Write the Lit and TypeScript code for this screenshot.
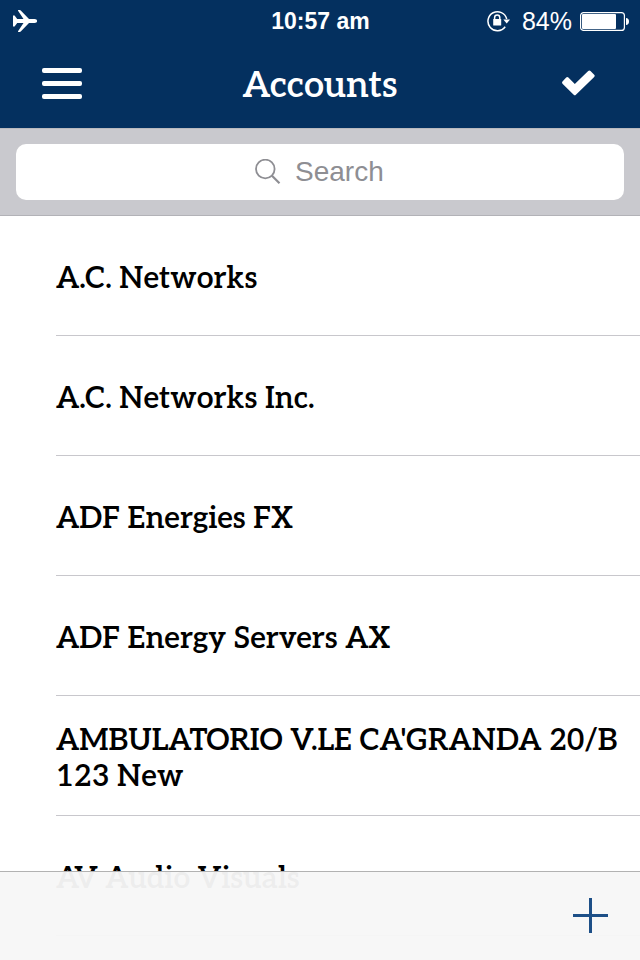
import { LitElement, html, css } from "lit";
import { customElement, property, state } from "lit/decorators.js";

@customElement("status-bar")
class StatusBar extends LitElement {
  @property() time = "";
  @property({ type: Number }) battery = 0;

  static styles = css`
    :host {
      display: grid;
      grid-template-columns: 1fr auto 1fr;
      align-items: center;
      height: 40px;
      padding: 0 11px 0 12px;
      color: #fff;
      font-family: "Liberation Sans", Helvetica, Arial, sans-serif;
    }
    svg {
      display: block;
    }
    .time {
      font-size: 23px;
      font-weight: 700;
      line-height: 42px;
    }
    .right {
      display: flex;
      align-items: center;
      justify-content: flex-end;
    }
    .percent {
      margin: 0 8px 0 12px;
      font-size: 25px;
      line-height: 42px;
    }
  `;

  render() {
    return html`
      <svg width="26" height="24" viewBox="0 0 26 24" fill="#fff" aria-label="Airplane mode">
        <path d="M1 6.500h1.600l2.600 3.500h6.300L6.200 2C5.800 1.200 6 1 6.500 1h1.300c.5 0 .8.200 1.200.7l8 8.300h5.500c1.700 0 2.600.9 2.600 2s-.9 2-2.600 2H17L9 22.300c-.4.5-.7.700-1.200.7H6.500c-.5 0-.7-.2-.3-1l5.300-8H5.200l-2.600 3.500H1z" />
      </svg>
      <span class="time">${this.time}</span>
      <div class="right">
        <svg width="23" height="22" viewBox="0 0 23 22" fill="none" stroke="#fff" stroke-width="1.500" aria-label="Rotation lock">
          <path d="M18.200 16.700A9.500 9.500 0 1 1 19.700 9" />
          <path d="M16.300 9.500h6.700l-3.300 4z" fill="#fff" stroke="none" />
          <path d="M7.600 9.500V7.700a2.600 2.600 0 0 1 5.200 0V9.500" />
          <rect x="6.200" y="9" width="8" height="6.500" rx="0.500" fill="#fff" stroke="none" />
        </svg>
        <span class="percent">${this.battery}%</span>
        <svg width="49" height="19" viewBox="0 0 49 19" fill="#fff" aria-label="Battery">
          <rect x="0.600" y="0.600" width="43.800" height="17.800" rx="3" fill="none" stroke="#fff" stroke-width="1.200" />
          <rect x="2" y="2" width=${Math.round(this.battery * 0.41)} height="15" rx="1" />
          <path d="M46 6c1.800 0 3 1.500 3 3.500S47.800 13 46 13z" />
        </svg>
      </div>
    `;
  }
}

@customElement("app-root")
class AppRoot extends LitElement {
  @state() private accounts = [
    "A.C. Networks",
    "A.C. Networks Inc.",
    "ADF Energies FX",
    "ADF Energy Servers AX",
    "AMBULATORIO V.LE CA'GRANDA 20/B 123 New",
    "AV Audio Visuals",
  ];

  static styles = css`
    :host {
      display: block;
      min-height: 100vh;
      background: #fff;
      color: #000;
      font-family: Aleo, "Liberation Serif", serif;
    }
    svg {
      display: block;
    }
    button {
      display: flex;
      align-items: center;
      justify-content: center;
      padding: 0;
      border: 0;
      background: none;
      cursor: pointer;
    }
    .top {
      background: #04305f;
    }
    .nav {
      display: grid;
      grid-template-columns: 1fr auto 1fr;
      align-items: center;
      height: 88px;
      padding: 0 32px;
    }
    .icon-button {
      width: 60px;
      height: 60px;
    }
    .done {
      justify-self: end;
    }
    h1 {
      margin: 0;
      padding-top: 4px;
      color: #fff;
      font-size: 36px;
      line-height: 44px;
      font-weight: 600;
    }
    .search {
      padding: 15px 16px;
      border-top: 1px solid #b9b9be;
      border-bottom: 1px solid #b2b2b7;
      background: #c9c9ce;
    }
    .field {
      display: flex;
      align-items: center;
      justify-content: center;
      gap: 14px;
      height: 56px;
      border-radius: 10px;
      background: #fff;
    }
    .field input {
      field-sizing: content;
      min-width: 90px;
      max-width: 80%;
      padding: 0;
      border: 0;
      outline: 0;
      background: none;
      color: #000;
      font-family: "Liberation Sans", Helvetica, Arial, sans-serif;
      font-size: 28px;
      line-height: 36px;
    }
    .field input::placeholder {
      color: #8e8e93;
      opacity: 1;
    }
    .list {
      margin: 0;
      padding: 0 0 0 56px;
      list-style: none;
    }
    .row {
      display: flex;
      align-items: center;
      box-sizing: border-box;
      min-height: 120px;
      padding: 6px 0 0;
      border-bottom: 1px solid #c8c7cc;
      font-size: 30px;
      line-height: 36px;
      font-weight: 600;
    }
    .row a {
      color: inherit;
      text-decoration: none;
    }
    .toolbar {
      position: fixed;
      inset: auto 0 0;
      display: flex;
      align-items: center;
      justify-content: flex-end;
      box-sizing: border-box;
      height: 89px;
      padding: 0 20px 2px;
      border-top: 1px solid #b2b2b2;
      background: rgba(247, 247, 247, 0.96);
    }
  `;

  render() {
    return html`
      <header class="top">
        <status-bar time="10:57 am" battery="84"></status-bar>
        <div class="nav">
          <button class="icon-button" aria-label="Menu">
            <svg width="40" height="32" viewBox="0 0 40 32" fill="#fff">
              <rect y="0" width="40" height="5" rx="2" />
              <rect y="13" width="40" height="5" rx="2" />
              <rect y="26" width="40" height="5" rx="2" />
            </svg>
          </button>
          <h1>Accounts</h1>
          <button class="icon-button done" aria-label="Done">
            <svg width="34" height="28" viewBox="0 0 34 28" fill="#fff">
              <path d="M1.500 13.700Q.6 12.600 1.500 11.500L5.200 7.600Q6.300 6.600 7.400 7.600L13.800 14L27.200.9Q28.400 0 29.500.9L33.200 4.700Q34.200 5.800 33.200 6.900L14.900 24.800Q13.800 25.800 12.700 24.800Z" />
            </svg>
          </button>
        </div>
      </header>
      <div class="search">
        <label class="field">
          <svg width="26" height="26" viewBox="0 0 26 26" fill="none" stroke="#8e8e93" stroke-width="1.800">
            <circle cx="10.300" cy="10" r="9.300" />
            <path d="M17 16.700L24.500 24.200" stroke-width="2.200" />
          </svg>
          <input type="text" placeholder="Search" aria-label="Search" />
        </label>
      </div>
      <ul class="list">
        ${this.accounts.map((name) => html`<li class="row"><a href="#">${name}</a></li>`)}
      </ul>
      <footer class="toolbar">
        <button class="icon-button" aria-label="Add account">
          <svg width="35" height="35" viewBox="0 0 35 35" fill="#1d4f87">
            <rect x="16" width="3" height="35" />
            <rect y="16" width="35" height="3" />
          </svg>
        </button>
      </footer>
    `;
  }
}
